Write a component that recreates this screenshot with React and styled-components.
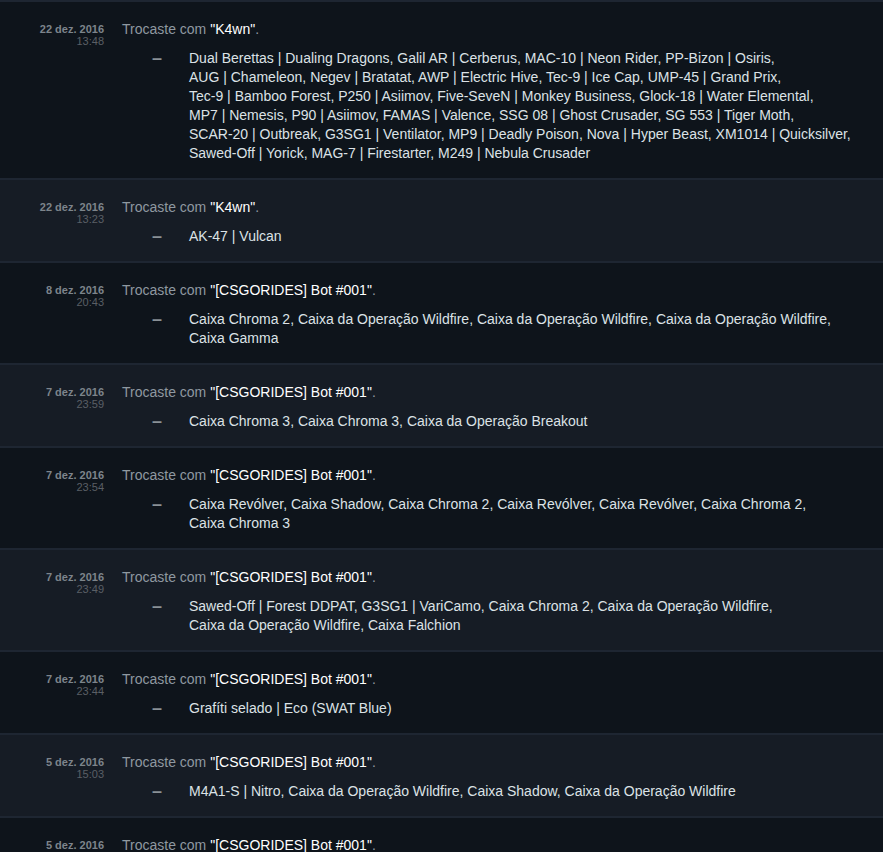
import styled, { createGlobalStyle } from "styled-components";

const GlobalStyle = createGlobalStyle`
  html, body {
    margin: 0;
    padding: 0;
    background: #0e141b;
  }
  body {
    font-family: "Liberation Sans", Arial, sans-serif;
  }
`;

const trades = [
  {
    date: "22 dez. 2016",
    time: "13:48",
    partner: "K4wn",
    items: [
      "Dual Berettas | Dualing Dragons",
      "Galil AR | Cerberus",
      "MAC-10 | Neon Rider",
      "PP-Bizon | Osiris",
      "AUG | Chameleon",
      "Negev | Bratatat",
      "AWP | Electric Hive",
      "Tec-9 | Ice Cap",
      "UMP-45 | Grand Prix",
      "Tec-9 | Bamboo Forest",
      "P250 | Asiimov",
      "Five-SeveN | Monkey Business",
      "Glock-18 | Water Elemental",
      "MP7 | Nemesis",
      "P90 | Asiimov",
      "FAMAS | Valence",
      "SSG 08 | Ghost Crusader",
      "SG 553 | Tiger Moth",
      "SCAR-20 | Outbreak",
      "G3SG1 | Ventilator",
      "MP9 | Deadly Poison",
      "Nova | Hyper Beast",
      "XM1014 | Quicksilver",
      "Sawed-Off | Yorick",
      "MAG-7 | Firestarter",
      "M249 | Nebula Crusader",
    ],
  },
  {
    date: "22 dez. 2016",
    time: "13:23",
    partner: "K4wn",
    items: ["AK-47 | Vulcan"],
  },
  {
    date: "8 dez. 2016",
    time: "20:43",
    partner: "[CSGORIDES] Bot #001",
    items: [
      "Caixa Chroma 2",
      "Caixa da Operação Wildfire",
      "Caixa da Operação Wildfire",
      "Caixa da Operação Wildfire",
      "Caixa Gamma",
    ],
  },
  {
    date: "7 dez. 2016",
    time: "23:59",
    partner: "[CSGORIDES] Bot #001",
    items: ["Caixa Chroma 3", "Caixa Chroma 3", "Caixa da Operação Breakout"],
  },
  {
    date: "7 dez. 2016",
    time: "23:54",
    partner: "[CSGORIDES] Bot #001",
    items: [
      "Caixa Revólver",
      "Caixa Shadow",
      "Caixa Chroma 2",
      "Caixa Revólver",
      "Caixa Revólver",
      "Caixa Chroma 2",
      "Caixa Chroma 3",
    ],
  },
  {
    date: "7 dez. 2016",
    time: "23:49",
    partner: "[CSGORIDES] Bot #001",
    items: [
      "Sawed-Off | Forest DDPAT",
      "G3SG1 | VariCamo",
      "Caixa Chroma 2",
      "Caixa da Operação Wildfire",
      "Caixa da Operação Wildfire",
      "Caixa Falchion",
    ],
  },
  {
    date: "7 dez. 2016",
    time: "23:44",
    partner: "[CSGORIDES] Bot #001",
    items: ["Grafíti selado | Eco (SWAT Blue)"],
  },
  {
    date: "5 dez. 2016",
    time: "15:03",
    partner: "[CSGORIDES] Bot #001",
    items: [
      "M4A1-S | Nitro",
      "Caixa da Operação Wildfire",
      "Caixa Shadow",
      "Caixa da Operação Wildfire",
    ],
  },
  {
    date: "5 dez. 2016",
    time: "14:58",
    partner: "[CSGORIDES] Bot #001",
    items: ["Caixa Chroma 2"],
  },
];

const History = () => {
  return (
    <>
      <GlobalStyle />
      <List>
        {trades.map((trade, i) => (
          <Row key={i} $alt={i % 2 === 1}>
            <DateCell>
              <DateText>{trade.date}</DateText>
              <TimeText>{trade.time}</TimeText>
            </DateCell>
            <Body>
              <Title>
                Trocaste com <Partner>"{trade.partner}"</Partner>.
              </Title>
              <ItemsRow>
                <Dash>–</Dash>
                <Items>
                  {trade.items.map((item, j) => (
                    <Item key={j}>
                      {item}
                      {j < trade.items.length - 1 ? "," : ""}
                    </Item>
                  ))}
                </Items>
              </ItemsRow>
            </Body>
          </Row>
        ))}
      </List>
    </>
  );
};

export default History;

const List = styled.div`
  display: flex;
  flex-direction: column;
`;

const Row = styled.div`
  display: grid;
  grid-template-columns: 104px 1fr;
  column-gap: 18px;
  padding: 17px 18px 15px 0;
  border-top: 2px solid #1e2632;
  background-color: ${(props) => (props.$alt ? "#161c25" : "#0e141b")};
`;

const DateCell = styled.div`
  display: flex;
  flex-direction: column;
  align-items: flex-end;
  padding-top: 4px;
  font-size: 11px;
  line-height: 12px;
`;

const DateText = styled.span`
  font-weight: bold;
  color: #7d848b;
`;

const TimeText = styled.span`
  color: #5a5f65;
`;

const Body = styled.div`
  display: flex;
  flex-direction: column;
  min-width: 0;
`;

const Title = styled.div`
  font-size: 14px;
  line-height: 20px;
  color: #8f98a0;
`;

const Partner = styled.span`
  color: #ffffff;
`;

const ItemsRow = styled.div`
  display: flex;
  margin-top: 10px;
  padding-left: 30px;
`;

const Dash = styled.span`
  flex: none;
  width: 37px;
  font-size: 18px;
  font-weight: bold;
  line-height: 19px;
  color: #8a9197;
`;

const Items = styled.div`
  flex: 1;
  font-size: 14px;
  line-height: 19px;
  color: #dce2e6;
`;

const Item = styled.span`
  white-space: nowrap;
  &::after {
    content: " ";
    white-space: normal;
  }
`;
